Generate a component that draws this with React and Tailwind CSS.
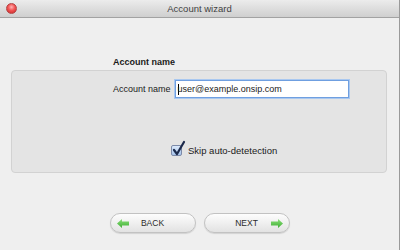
import React from "react";

function Arrow({ dir }) {
  return (
    <svg width="12" height="9" viewBox="0 0 12 9" className="shrink-0">
      <defs>
        <linearGradient id={"g" + dir} x1="0" y1="0" x2="0" y2="1">
          <stop offset="0" stopColor="#8be07a" />
          <stop offset="1" stopColor="#3fae34" />
        </linearGradient>
      </defs>
      {dir === "left" ? (
        <polygon points="0,4.5 5,0 5,2.5 12,2.5 12,6.5 5,6.5 5,9" fill={"url(#g" + dir + ")"} />
      ) : (
        <polygon points="12,4.5 7,0 7,2.5 0,2.5 0,6.5 7,6.5 7,9" fill={"url(#g" + dir + ")"} />
      )}
    </svg>
  );
}

export default function App() {
  const font = { fontFamily: '"Liberation Sans", Arial, sans-serif' };
  return (
    <div
      className="w-[400px] h-[250px] bg-[#efefef] flex flex-col border-r border-[#9a9a9a] text-[#1a1a1a] overflow-hidden"
      style={font}
    >
      {/* title bar */}
      <div className="relative h-[18px] shrink-0 flex items-center justify-center bg-gradient-to-b from-[#ececec] to-[#cfcfcf] border-b border-[#a2a2a2]">
        <div className="absolute left-[6px] top-[3px] w-[11px] h-[11px] rounded-full border border-[#b34545] bg-[radial-gradient(circle_at_50%_35%,#ffb3b3_0%,#f25555_45%,#c92222_100%)]" />
        <span className="text-[9.5px] leading-none text-[#3f3f3f]">Account wizard</span>
      </div>

      {/* header */}
      <div className="mt-[38px] pl-[113px] h-[12px] text-[9px] leading-[12px] font-bold">Account name</div>

      {/* group box */}
      <div className="mt-[2px] ml-[11px] w-[376px] h-[103px] bg-[#e4e4e4] border border-[#d2d2d2] rounded-[4px] flex flex-col">
        <div className="mt-[9px] flex items-center pl-[101px] gap-[4px]">
          <span className="text-[9px] leading-none">Account name</span>
          <div className="w-[174px] h-[18px] bg-white border border-[#6f9fe0] shadow-[0_0_0_1px_#a9c8f0] flex items-center pl-[2px] text-[9px] leading-none">
            <span className="inline-block w-px h-[11px] bg-black mr-[-1px]" />
            <span>user@example.onsip.com</span>
          </div>
        </div>
        <div className="mt-[47px] flex items-center pl-[159px] gap-[6px]">
          <div className="relative w-[11px] h-[11px] rounded-[2px] border border-[#7c8aa8] bg-gradient-to-b from-[#dbe9fb] to-[#a6c3ea]">
            <svg width="14" height="16" viewBox="0 0 14 16" className="absolute left-[0px] top-[-6px]">
              <path d="M2 10 L5 14 L12 2" stroke="#1c2a4c" strokeWidth="2.2" fill="none" strokeLinecap="round" strokeLinejoin="round" />
            </svg>
          </div>
          <span className="text-[9.5px] leading-none">Skip auto-detetection</span>
        </div>
      </div>

      {/* buttons */}
      <div className="mt-[40px] flex justify-center gap-[8px]">
        <div className="relative w-[86px] h-[20px] rounded-full border border-[#c2c2c2] bg-gradient-to-b from-[#fdfdfd] to-[#e2e2e2] shadow-[0_1px_1px_rgba(0,0,0,0.12)] flex items-center justify-center">
          <div className="absolute left-[6px] top-[5px]"><Arrow dir="left" /></div>
          <span className="text-[8.5px] leading-none text-[#2a2a2a]">BACK</span>
        </div>
        <div className="relative w-[86px] h-[20px] rounded-full border border-[#c2c2c2] bg-gradient-to-b from-[#fdfdfd] to-[#e2e2e2] shadow-[0_1px_1px_rgba(0,0,0,0.12)] flex items-center justify-center">
          <span className="text-[8.5px] leading-none text-[#2a2a2a]">NEXT</span>
          <div className="absolute right-[6px] top-[5px]"><Arrow dir="right" /></div>
        </div>
      </div>
    </div>
  );
}
